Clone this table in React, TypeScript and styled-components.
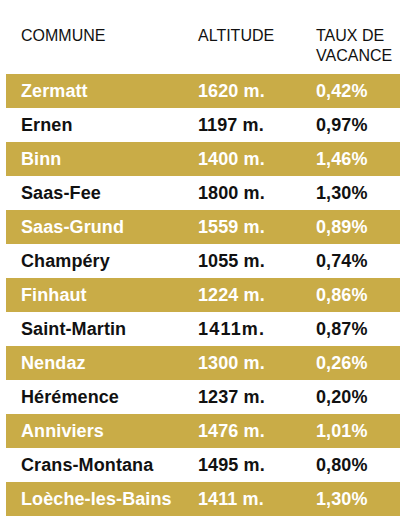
import React from 'react';
import styled, { createGlobalStyle } from 'styled-components';

const GlobalStyle = createGlobalStyle`
body {
  margin: 0;
  background: #ffffff;
  font-family: "Liberation Sans", Arial, sans-serif;
}
`;

const Table = styled.section`
width: 394px;
margin-left: 6px;
padding-top: 26px;
`;

const Header = styled.div`
display: grid;
grid-template-columns: 177px 118px 1fr;
padding-left: 15px;
padding-bottom: 8px;
font-size: 16px;
line-height: 20px;
color: #111111;
text-transform: uppercase;
`;

const Row = styled.div<{ gold: boolean }>`
display: grid;
grid-template-columns: 177px 118px 1fr;
align-items: center;
height: 34px;
padding-left: 15px;
background: ${(p) => (p.gold ? '#c9ac47' : '#ffffff')};
color: ${(p) => (p.gold ? '#ffffff' : '#111111')};
font-size: 18px;
font-weight: bold;
`;

const Cell = styled.span<{ spaced?: boolean }>`
white-space: nowrap;
letter-spacing: ${(p) => (p.spaced ? '1.2px' : '0.1px')};
`;

const data = [
  ['Zermatt', '1620 m.', '0,42%'],
  ['Ernen', '1197 m.', '0,97%'],
  ['Binn', '1400 m.', '1,46%'],
  ['Saas-Fee', '1800 m.', '1,30%'],
  ['Saas-Grund', '1559 m.', '0,89%'],
  ['Champéry', '1055 m.', '0,74%'],
  ['Finhaut', '1224 m.', '0,86%'],
  ['Saint-Martin', '1411m.', '0,87%'],
  ['Nendaz', '1300 m.', '0,26%'],
  ['Hérémence', '1237 m.', '0,20%'],
  ['Anniviers', '1476 m.', '1,01%'],
  ['Crans-Montana', '1495 m.', '0,80%'],
  ['Loèche-les-Bains', '1411 m.', '1,30%'],
];

const App = () => {
  return (
    <>
      <GlobalStyle />
      <Table>
        <Header>
          <span>Commune</span>
          <span>Altitude</span>
          <span>
            Taux de
            <br />
            vacance
          </span>
        </Header>
        {data.map((row, i) => (
          <Row key={row[0]} gold={i % 2 === 0}>
            <Cell>{row[0]}</Cell>
            <Cell spaced={row[1] === '1411m.'}>{row[1]}</Cell>
            <Cell>{row[2]}</Cell>
          </Row>
        ))}
      </Table>
    </>
  );
};

export default App;
